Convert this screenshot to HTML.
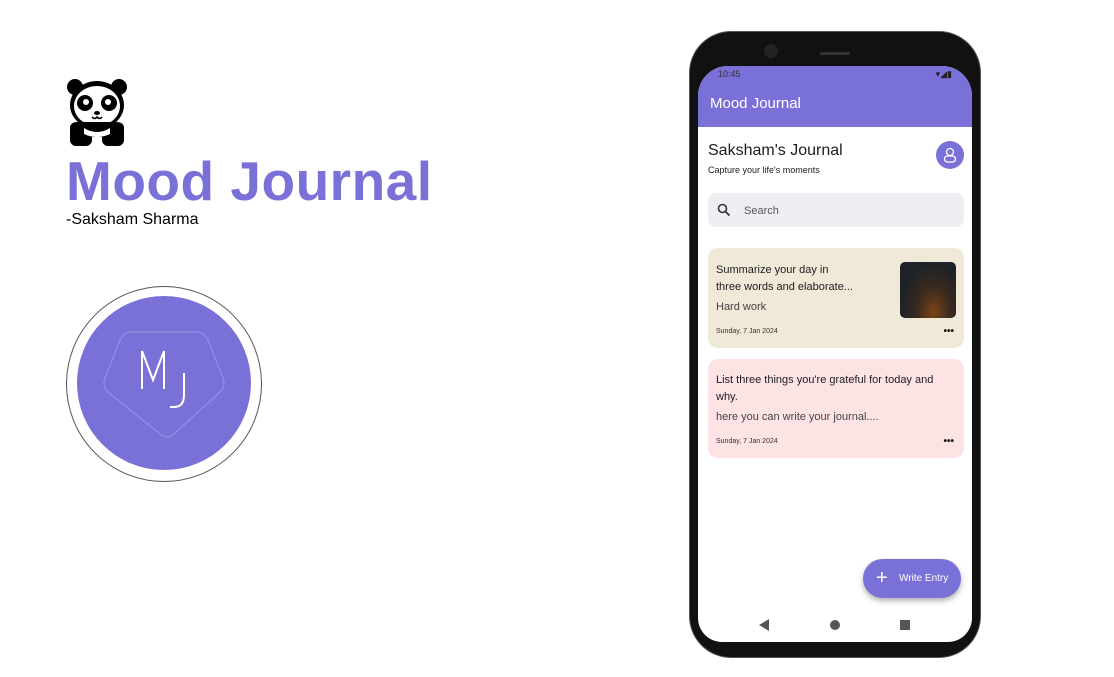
<!DOCTYPE html>
<html><head><style>
body{margin:0;width:1114px;height:677px;background:#fff;font-family:"Liberation Sans",sans-serif;position:relative;overflow:hidden}
.a{position:absolute}
.t{color:#1c1c1f}
</style></head><body>
<svg class="a" style="left:66px;top:78px" width="62" height="70" viewBox="0 0 62 70">
<circle cx="9" cy="9" r="8" fill="#000"/><circle cx="53" cy="9" r="8" fill="#000"/>
<ellipse cx="31" cy="27" rx="27" ry="24" fill="#000"/>
<ellipse cx="31" cy="28" rx="23" ry="20" fill="#fff"/>
<ellipse cx="19" cy="25" rx="8" ry="8" fill="#000"/><ellipse cx="43" cy="25" rx="8" ry="8" fill="#000"/>
<circle cx="20" cy="24" r="3" fill="#fff"/><circle cx="42" cy="24" r="3" fill="#fff"/>
<ellipse cx="31" cy="35" rx="3" ry="2" fill="#000"/>
<path d="M26 39q2.5 3 5 0q2.5 3 5 0" stroke="#000" stroke-width="1.6" fill="none"/>
<path d="M4 50q0-6 8-6h38q8 0 8 6v12a6 6 0 0 1-6 6H42a6 6 0 0 1-6-6v-3h-10v3a6 6 0 0 1-6 6H10a6 6 0 0 1-6-6z" fill="#000"/>
<path d="M18 50q13 8 26 0v6q-13 6-26 0z" fill="#fff"/>
</svg>
<div class="a" style="left:66px;top:149px;font-size:55px;font-weight:bold;color:#7a71d8;letter-spacing:0.5px">Mood Journal</div>
<div class="a" style="left:66px;top:211px;font-size:16px;color:#000">-Saksham Sharma</div>
<div class="a" style="left:66px;top:286px;width:194px;height:194px;border:1px solid #555;border-radius:50%"></div>
<div class="a" style="left:77px;top:296px;width:174px;height:174px;background:#7a71d8;border-radius:50%"></div>
<svg class="a" style="left:100px;top:330px" width="128" height="110"><path d="M30 2h66q8 0 12 8l15 38q3 8-3 14l-46 42q-7 6-14 0L8 62q-6-6-3-14l15-38q4-8 10-8z" fill="none" stroke="#9b95e3" stroke-width="1"/>
<path d="M42 59V21L53 50L64 21V59" stroke="#fff" stroke-width="2" fill="none"/><path d="M84 43v22q0 12-10 12h-4" stroke="#fff" stroke-width="2" fill="none"/></svg>

<div class="a" style="left:689px;top:31px;width:292px;height:627px;background:#111;border-radius:42px;border:1px solid #555;box-sizing:border-box"></div>
<div class="a" style="left:764px;top:44px;width:14px;height:14px;border-radius:50%;background:#222"></div>
<div class="a" style="left:820px;top:52px;width:30px;height:3px;border-radius:2px;background:#333"></div>
<div class="a" style="left:698px;top:66px;width:274px;height:576px;background:#fff;border-radius:30px 30px 24px 24px;overflow:hidden">
 <div style="height:61px;background:#7a71d8;position:relative">
  <div class="a" style="left:20px;top:3px;font-size:9px;color:#333">10:45</div>
  <div class="a" style="right:20px;top:3px;font-size:9px;color:#222">▾◢▮</div>
  <div class="a" style="left:12px;top:29px;font-size:15px;color:#fff">Mood Journal</div>
 </div>
 <div class="a t" style="left:10px;top:76px;font-size:16px">Saksham's Journal</div>
 <div class="a t" style="left:10px;top:99px;font-size:9px">Capture your life's moments</div>
 <div class="a" style="left:238px;top:75px;width:28px;height:28px;border-radius:50%;background:#7a71d8"><svg width="28" height="28"><circle cx="14" cy="11" r="3.5" fill="none" stroke="#fff" stroke-width="1.3"/><rect x="8.5" y="15" width="11" height="6" rx="3" fill="none" stroke="#fff" stroke-width="1.3"/></svg></div>
 <div class="a" style="left:10px;top:127px;width:256px;height:34px;background:#eeeff3;border-radius:8px">
  <svg class="a" style="left:9px;top:10px" width="14" height="14"><circle cx="5.5" cy="5.5" r="4" stroke="#333" stroke-width="1.6" fill="none"/><path d="M8.5 8.5l4 4" stroke="#333" stroke-width="1.8"/></svg>
  <div class="a" style="left:36px;top:12px;font-size:11px;color:#555">Search</div></div>
 <div class="a" style="left:10px;top:182px;width:256px;height:100px;background:#f1e9d8;border-radius:10px">
  <div class="a t" style="left:8px;top:14px;font-size:11px;line-height:17px">Summarize your day in<br>three words and elaborate...</div>
  <div class="a" style="left:8px;top:53px;font-size:11px;color:#444">Hard work</div>
  <div class="a" style="left:8px;top:80px;font-size:7px;color:#333">Sunday, 7 Jan 2024</div>
  <div class="a" style="right:10px;top:78px;font-size:10px;color:#111;font-weight:bold">•••</div>
  <div class="a" style="left:192px;top:14px;width:56px;height:56px;border-radius:5px;background:radial-gradient(ellipse at 60% 90%,#7a4418 0,#3a2a1e 35%,#1e2226 70%)"></div>
 </div>
 <div class="a" style="left:10px;top:293px;width:256px;height:99px;background:#fee3e4;border-radius:10px">
  <div class="a t" style="left:8px;top:13px;font-size:11px;line-height:17px;width:235px">List three things you're grateful for today and why.</div>
  <div class="a" style="left:8px;top:52px;font-size:11px;color:#444">here you can write your journal....</div>
  <div class="a" style="left:8px;top:79px;font-size:7px;color:#333">Sunday, 7 Jan 2024</div>
  <div class="a" style="right:10px;top:77px;font-size:10px;color:#111;font-weight:bold">•••</div>
 </div>
 <div class="a" style="left:165px;top:493px;width:98px;height:39px;border-radius:20px;background:#7a71d8;box-shadow:0 3px 6px rgba(0,0,0,.3);color:#fff">
  <div class="a" style="left:13px;top:9px;font-size:20px;line-height:20px">+</div>
  <div class="a" style="left:36px;top:14px;font-size:10px">Write Entry</div></div>
 <svg class="a" style="left:60px;top:552px" width="160" height="14"><path d="M1 7l10-6v12z" fill="#555"/><circle cx="77" cy="7" r="5" fill="#555"/><rect x="142" y="2" width="10" height="10" fill="#555"/></svg>
</div>
</body></html>
